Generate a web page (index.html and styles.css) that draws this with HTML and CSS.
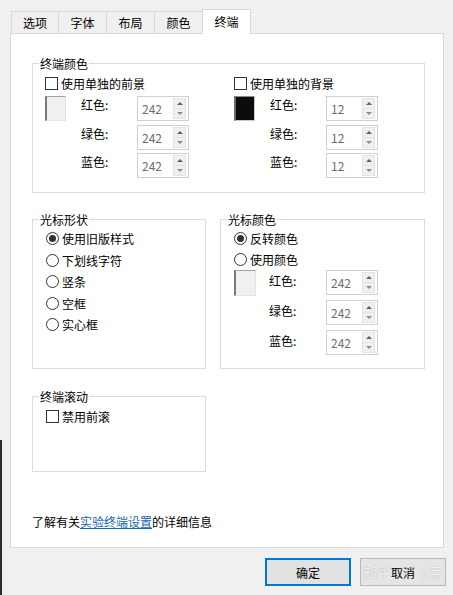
FILE: index.html
```html
<!DOCTYPE html>
<html lang="zh-CN">
<head>
    <meta charset="UTF-8">
    <title>终端设置</title>
    <link rel="stylesheet" href="styles.css">
</head>
<body>
    <div class="dialog">
        <div class="tabs">
            <div class="tab first">选项</div>
            <div class="tab">字体</div>
            <div class="tab">布局</div>
            <div class="tab">颜色</div>
            <div class="tab active">终端</div>
        </div>

        <div class="panel">
            <fieldset class="group termColors">
                <legend>终端颜色</legend>
                <div class="half">
                    <div class="check"><span class="box"></span>使用单独的前景</div>
                    <div class="picker">
                        <span class="swatch light"></span>
                        <div class="rgbRows">
                            <div class="rgbRow"><span class="rgbLabel">红色:</span><div class="spin"><span class="val">242</span><span class="btns"><span class="up"></span><span class="down"></span></span></div></div>
                            <div class="rgbRow"><span class="rgbLabel">绿色:</span><div class="spin"><span class="val">242</span><span class="btns"><span class="up"></span><span class="down"></span></span></div></div>
                            <div class="rgbRow"><span class="rgbLabel">蓝色:</span><div class="spin"><span class="val">242</span><span class="btns"><span class="up"></span><span class="down"></span></span></div></div>
                        </div>
                    </div>
                </div>
                <div class="half">
                    <div class="check"><span class="box"></span>使用单独的背景</div>
                    <div class="picker">
                        <span class="swatch dark"></span>
                        <div class="rgbRows">
                            <div class="rgbRow"><span class="rgbLabel">红色:</span><div class="spin"><span class="val">12</span><span class="btns"><span class="up"></span><span class="down"></span></span></div></div>
                            <div class="rgbRow"><span class="rgbLabel">绿色:</span><div class="spin"><span class="val">12</span><span class="btns"><span class="up"></span><span class="down"></span></span></div></div>
                            <div class="rgbRow"><span class="rgbLabel">蓝色:</span><div class="spin"><span class="val">12</span><span class="btns"><span class="up"></span><span class="down"></span></span></div></div>
                        </div>
                    </div>
                </div>
            </fieldset>

            <div class="row">
                <fieldset class="group cursorShape">
                    <legend>光标形状</legend>
                    <div class="option"><span class="radio on"></span>使用旧版样式</div>
                    <div class="option"><span class="radio"></span>下划线字符</div>
                    <div class="option"><span class="radio"></span>竖条</div>
                    <div class="option"><span class="radio"></span>空框</div>
                    <div class="option"><span class="radio"></span>实心框</div>
                </fieldset>
                <fieldset class="group cursorColor">
                    <legend>光标颜色</legend>
                    <div class="option short"><span class="radio on"></span>反转颜色</div>
                    <div class="option short"><span class="radio"></span>使用颜色</div>
                    <div class="picker wide">
                        <span class="swatch light big"></span>
                        <div class="rgbRows loose">
                            <div class="rgbRow"><span class="rgbLabel">红色:</span><div class="spin"><span class="val">242</span><span class="btns"><span class="up"></span><span class="down"></span></span></div></div>
                            <div class="rgbRow"><span class="rgbLabel">绿色:</span><div class="spin"><span class="val">242</span><span class="btns"><span class="up"></span><span class="down"></span></span></div></div>
                            <div class="rgbRow"><span class="rgbLabel">蓝色:</span><div class="spin"><span class="val">242</span><span class="btns"><span class="up"></span><span class="down"></span></span></div></div>
                        </div>
                    </div>
                </fieldset>
            </div>

            <div class="row">
                <fieldset class="group scrolling">
                    <legend>终端滚动</legend>
                    <div class="check"><span class="box"></span>禁用前滚</div>
                </fieldset>
            </div>

            <p class="info">了解有关<a href="#">实验终端设置</a>的详细信息</p>
        </div>

        <div class="buttons">
            <button class="btn default">确定</button>
            <button class="btn">取消</button>
        </div>

        <div class="watermark"><span>知乎</span><span class="tail">c芽</span></div>
    </div>
</body>
</html>
```

FILE: styles.css
```css
body {
    margin: 0;
    background-color: #f0f0f0;
    font-family: "Noto Sans CJK SC", "Microsoft YaHei", sans-serif;
    font-size: 12px;
    line-height: 17px;
    color: #000;
}

.dialog {
    position: relative;
    width: 453px;
    height: 595px;
    box-sizing: border-box;
    padding: 9px 0 0 10px;
    overflow: hidden;
}

.dialog::before {
    content: "";
    position: absolute;
    left: 0;
    top: 440px;
    bottom: 0;
    width: 2px;
    background: #2b2b2b;
}

/* tabs */
.tabs {
    display: flex;
    align-items: flex-end;
    height: 24px;
    margin-left: 1px;
}

.tab {
    width: 49px;
    height: 22px;
    box-sizing: border-box;
    margin-right: -1px;
    border: 1px solid #d9d9d9;
    border-bottom: none;
    background-color: #f0f0f0;
    text-align: center;
    line-height: 21px;
}

.tab.first {
    width: 48px;
}

.tab.active {
    position: relative;
    z-index: 1;
    height: 25px;
    margin-bottom: -1px;
    background-color: #fff;
    line-height: 23px;
}

/* panel */
.panel {
    width: 434px;
    height: 515px;
    box-sizing: border-box;
    padding: 21px 18px 0 21px;
    border: 1px solid #d9d9d9;
    background-color: #fff;
}

.group {
    margin: 0;
    min-width: 0;
    box-sizing: border-box;
    border: 1px solid #dcdcdc;
}

.group legend {
    margin-left: -7px;
    padding: 0 1px;
    line-height: 17px;
}

.termColors {
    display: grid;
    grid-template-columns: 189px 1fr;
    padding: 2px 0 14px 12px;
}

.termColors legend {
    margin-left: -6px;
}

.row {
    display: grid;
    grid-template-columns: 174px 205px;
    gap: 14px;
    margin-top: 18px;
}

.cursorShape, .cursorColor {
    height: 158px;
    padding: 0 0 0 13px;
}

.scrolling {
    height: 84px;
    padding: 2px 0 0 13px;
}

.row + .row {
    margin-top: 19px;
}

/* checkbox / radio */
.check, .option {
    display: flex;
    align-items: center;
    height: 18px;
}

.option {
    height: 21.5px;
}

.option.short {
    height: 21px;
}

.box, .radio {
    width: 13px;
    height: 13px;
    box-sizing: border-box;
    border: 1px solid #333;
    background: #fff;
    margin-right: 3px;
    flex-shrink: 0;
}

.radio {
    border-radius: 50%;
    position: relative;
}

.radio.on::after {
    content: "";
    position: absolute;
    left: 2px;
    top: 2px;
    width: 7px;
    height: 7px;
    border-radius: 50%;
    background: #333;
}

/* colour pickers */
.picker {
    display: flex;
    margin-top: 4px;
}

.picker.wide {
    margin-top: 0;
}

.swatch {
    width: 21px;
    height: 25px;
    box-sizing: border-box;
    border-style: solid;
    border-width: 1px 1px 1px 2px;
    border-color: #a0a0a0 #e3e3e3 #e3e3e3 #7a7a7a;
    margin-right: 15px;
    flex-shrink: 0;
}

.swatch.light {
    background: #f0f0f0;
}

.swatch.dark {
    background: #0c0c0c;
    border-color: #8a8a8a #c8c8c8 #c8c8c8 #6a6a6a;
}

.swatch.big {
    width: 22px;
    height: 26px;
    margin-right: 13px;
}

.rgbRows {
    display: flex;
    flex-direction: column;
    gap: 3.5px;
}

.rgbRows.loose {
    gap: 5px;
}

.rgbRow {
    display: flex;
    height: 25px;
}

.rgbLabel {
    width: 56px;
}

.loose .rgbLabel {
    width: 57px;
    padding-top: 2px;
}

.spin {
    display: flex;
    width: 52px;
    height: 25px;
    box-sizing: border-box;
    border: 1px solid #cfcfcf;
    background: #fff;
}

.spin .val {
    flex: 1;
    padding-left: 4px;
    line-height: 23px;
    color: #6d6d6d;
}

.spin .btns {
    display: flex;
    flex-direction: column;
    width: 13px;
    margin: 1px 2px 1px 0;
}

.spin .btns span {
    flex: 1;
    position: relative;
    background: #f0f0f0;
    border: 1px solid #e3e3e3;
}

.spin .btns .down {
    border-top: none;
}

.spin .btns span::after {
    content: "";
    position: absolute;
    left: 3px;
    top: 3px;
    border-left: 3px solid transparent;
    border-right: 3px solid transparent;
}

.spin .btns .up::after {
    border-bottom: 3px solid #606060;
}

.spin .btns .down::after {
    border-top: 3px solid #8c8c8c;
}

/* footer text */
.info {
    margin: 41px 0 0;
}

.info a {
    color: #1565b0;
    text-decoration: underline;
}

/* buttons */
.buttons {
    display: flex;
    justify-content: flex-end;
    gap: 9px;
    margin-top: 10px;
    padding-right: 7px;
}

.btn {
    width: 86px;
    height: 28px;
    box-sizing: border-box;
    border: 1px solid #b9b9b9;
    background: #e5e5e5;
    font-family: inherit;
    font-size: 12px;
    color: #000;
    padding: 0;
}

.btn.default {
    border: 2px solid #0078d7;
    background: #e1e1e1;
}

.watermark {
    position: absolute;
    left: 363px;
    top: 562px;
    width: 80px;
    display: flex;
    justify-content: space-between;
    font-size: 14px;
    line-height: 20px;
    color: rgba(255, 255, 255, 0.85);
    text-shadow: 0 0 1px #9a9a9a;
    pointer-events: none;
}
```
